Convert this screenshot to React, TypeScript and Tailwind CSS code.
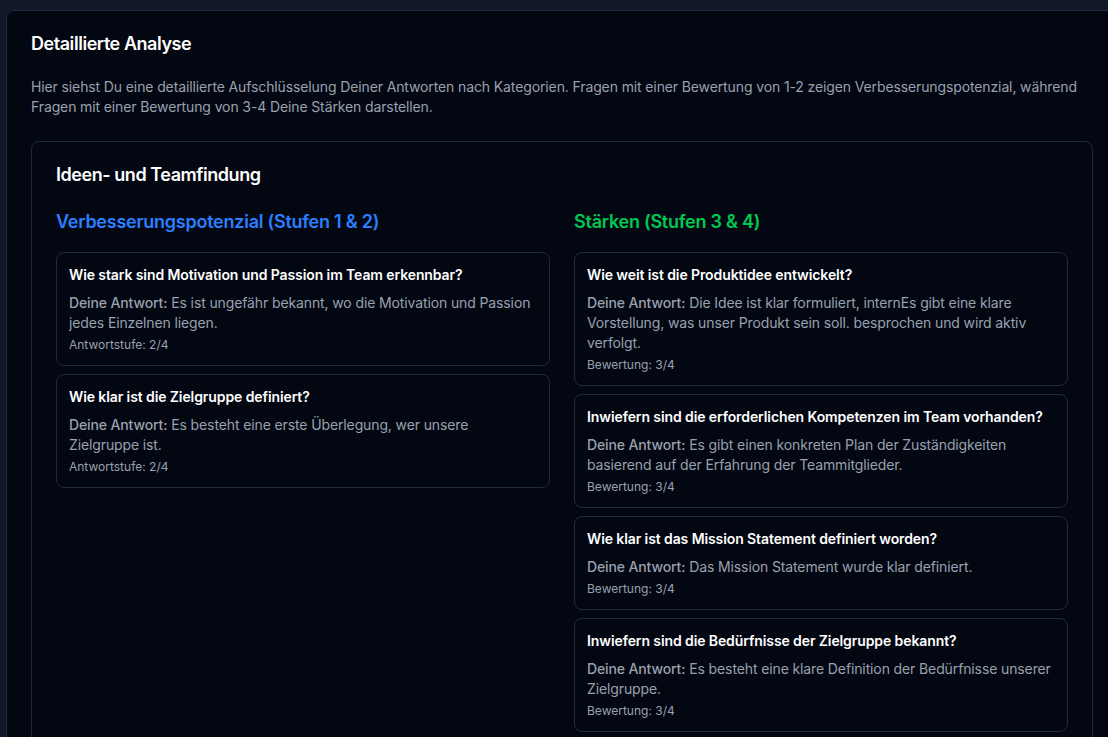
type Item = { q: string; a: string; label: string };

const weak: Item[] = [
  {
    q: "Wie stark sind Motivation und Passion im Team erkennbar?",
    a: "Es ist ungefähr bekannt, wo die Motivation und Passion jedes Einzelnen liegen.",
    label: "Antwortstufe: 2/4",
  },
  {
    q: "Wie klar ist die Zielgruppe definiert?",
    a: "Es besteht eine erste Überlegung, wer unsere Zielgruppe ist.",
    label: "Antwortstufe: 2/4",
  },
];

const strong: Item[] = [
  {
    q: "Wie weit ist die Produktidee entwickelt?",
    a: "Die Idee ist klar formuliert, internEs gibt eine klare Vorstellung, was unser Produkt sein soll. besprochen und wird aktiv verfolgt.",
    label: "Bewertung: 3/4",
  },
  {
    q: "Inwiefern sind die erforderlichen Kompetenzen im Team vorhanden?",
    a: "Es gibt einen konkreten Plan der Zuständigkeiten basierend auf der Erfahrung der Teammitglieder.",
    label: "Bewertung: 3/4",
  },
  {
    q: "Wie klar ist das Mission Statement definiert worden?",
    a: "Das Mission Statement wurde klar definiert.",
    label: "Bewertung: 3/4",
  },
  {
    q: "Inwiefern sind die Bedürfnisse der Zielgruppe bekannt?",
    a: "Es besteht eine klare Definition der Bedürfnisse unserer Zielgruppe.",
    label: "Bewertung: 3/4",
  },
];

function AnswerCard({ item }: { item: Item }) {
  return (
    <div className="rounded-lg border border-gray-800 p-3">
      <p className="text-sm font-semibold text-white mb-2 tracking-[-0.1px]">{item.q}</p>
      <p className="text-sm text-gray-400 tracking-[-0.12px]">
        <span className="font-medium">Deine Antwort:</span> {item.a}
      </p>
      <p className="text-xs text-gray-400 mt-1">{item.label}</p>
    </div>
  );
}

function Column({ title, color, items }: { title: string; color: string; items: Item[] }) {
  return (
    <div>
      <h4 className={`text-lg font-semibold mb-4 tracking-[-0.25px] ${color}`}>{title}</h4>
      <div className="space-y-2">
        {items.map((it) => (
          <AnswerCard key={it.q} item={it} />
        ))}
      </div>
    </div>
  );
}

export default function App() {
  return (
    <div
      className="w-[1108px] h-[737px] overflow-hidden bg-[#111827] pt-[10px] pl-[6px]"
      style={{ fontFamily: "Inter, 'Noto Sans', sans-serif" }}
    >
      <div className="w-[1112px] rounded-lg border border-gray-800 bg-[#030712]">
        <div className="p-6">
          <h2 className="text-lg leading-none font-semibold tracking-tight text-white">Detaillierte Analyse</h2>
        </div>
        <div className="px-6">
          <p className="text-sm text-gray-400 mb-6 tracking-[-0.12px]">
            Hier siehst Du eine detaillierte Aufschlüsselung Deiner Antworten nach Kategorien. Fragen mit einer
            Bewertung von 1-2 zeigen Verbesserungspotenzial, während Fragen mit einer Bewertung von 3-4 Deine Stärken
            darstellen.
          </p>
          <div className="rounded-lg border border-gray-800 bg-[#030712]">
            <div className="p-6">
              <h3 className="text-lg leading-none font-semibold tracking-tight text-white">Ideen- und Teamfindung</h3>
            </div>
            <div className="px-6 pb-6 grid grid-cols-2 gap-6">
              <Column title="Verbesserungspotenzial (Stufen 1 & 2)" color="text-blue-500" items={weak} />
              <Column title="Stärken (Stufen 3 & 4)" color="text-green-500" items={strong} />
            </div>
          </div>
        </div>
      </div>
    </div>
  );
}
